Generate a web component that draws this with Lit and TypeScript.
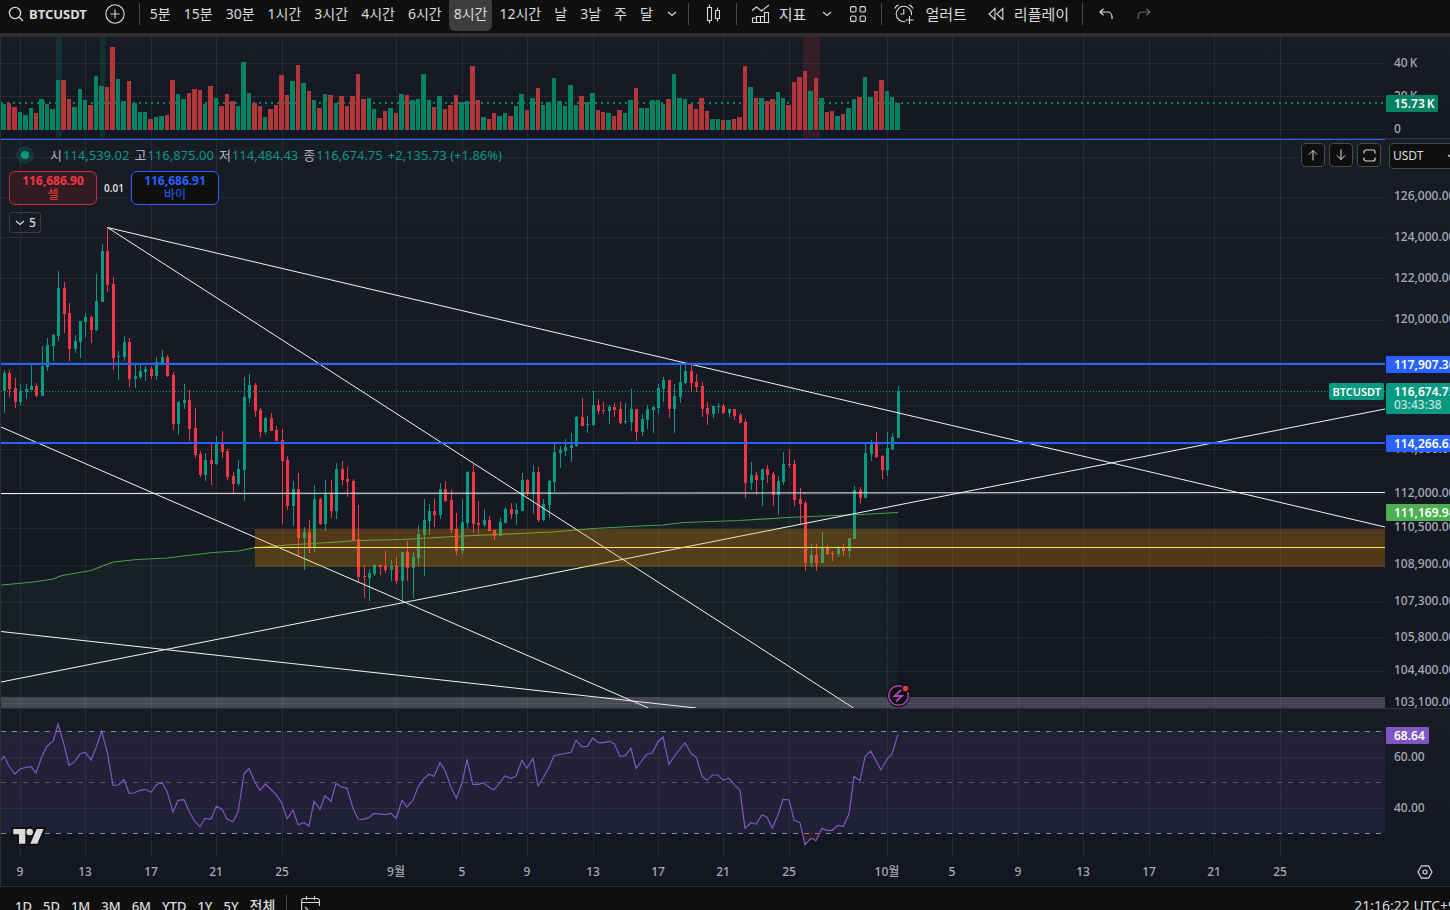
import { LitElement, html, svg, css } from "lit";
import { customElement, state } from "lit/decorators.js";
import { classMap } from "lit/directives/class-map.js";

const PANE_X = 1;
const VOLUME_TOP = 37;
const PRICE_TOP = 139;
const RSI_TOP = 709;
const FAR = 4000;

/* direction, high, body top, body bottom, low, volume top: one entry per 8h candle, in chart units */
const BARS = `
g 370 373 391 413 312;r 370 373 389 397 309;r 378 388 402 408 321;g 384 391 402 405 336;g 384 389 392 399 345
g 365 386 390 390 324;r 383 386 396 397 339;g 346 366 396 396 297;g 338 345 367 371 312;g 334 335 346 361 327
g 271 288 336 341 240;r 282 288 314 333 240;r 303 313 349 361 297;g 335 341 349 353 321;g 321 321 342 358 267
g 313 317 322 337 300;r 316 317 330 343 315;g 274 301 330 331 228;g 244 251 302 302 258;r 228 251 285 292 261
r 277 284 358 370 141;g 351 356 357 380 237;g 336 342 357 361 303;r 338 342 379 387 243;g 365 376 379 388 309
g 365 371 377 379 336;g 366 369 372 381 336;r 366 369 376 379 357;g 357 362 376 380 351;g 350 357 363 363 348
r 355 357 376 377 345;r 372 375 424 430 240;g 401 402 424 435 282;g 384 400 403 409 297;r 390 400 429 441 279
r 408 428 455 458 267;r 451 454 475 477 270;g 453 460 475 481 312;r 444 460 464 485 258;g 436 443 464 465 294
r 431 442 452 458 318;r 449 451 477 480 282;r 472 476 484 493 303;g 460 469 484 486 318;g 377 397 470 501 186
g 374 385 398 403 279;r 383 385 411 417 309;r 408 410 432 437 318;g 417 418 432 434 351;r 413 418 431 431 327
r 426 430 441 441 315;r 429 440 461 524 225;r 456 460 506 510 285;g 481 489 506 526 243;r 473 489 538 557 195
g 527 532 538 570 249;r 520 532 548 553 273;g 485 499 548 552 300;r 498 499 524 525 324;g 480 494 524 531 282
r 480 494 511 518 285;g 463 469 511 519 309;r 461 469 480 485 288;r 467 479 482 497 318;r 479 481 540 541 288
r 505 539 577 582 222;r 566 576 577 598 297;g 569 573 578 601 294;g 564 565 574 576 327;r 565 565 567 575 354
r 551 566 570 573 333;g 560 566 570 581 324;r 557 566 581 584 339;g 552 552 581 602 282;r 541 552 568 581 285
g 552 557 568 598 300;g 525 534 558 565 297;g 499 520 535 576 222;g 504 511 521 535 300;r 499 511 515 527 321
g 483 489 515 519 288;r 481 489 501 502 327;r 490 500 530 533 315;r 513 529 551 555 285;g 499 522 551 554 306
g 471 472 523 529 303;r 464 472 524 533 198;r 501 523 525 534 300;g 509 520 525 527 351;r 516 520 531 531 357
r 530 530 536 540 339;g 518 522 536 536 348;g 507 509 523 523 339;r 503 509 514 519 348;g 503 510 514 525 318
g 473 480 511 511 282;r 479 480 493 496 330;g 465 472 493 514 294;r 467 472 520 522 264;g 499 504 520 521 315
g 480 481 505 518 306;g 444 452 482 492 234;g 446 450 453 468 303;g 439 447 451 456 318;g 433 445 448 462 255
g 416 417 446 447 315;r 398 417 426 426 288;g 416 424 425 433 306;g 391 405 425 426 279;r 399 405 411 414 330
r 402 410 411 414 336;g 405 407 411 424 339;r 403 407 410 417 348;r 402 409 423 424 330;g 403 421 422 424 339
g 389 409 422 431 300;r 409 409 432 441 264;g 414 419 432 436 324;g 405 409 420 429 324;g 406 407 410 433 300
g 384 388 408 414 300;g 377 380 389 402 312;r 380 380 409 418 297;g 384 396 409 433 222;g 365 382 397 403 294
g 365 371 383 384 297;r 365 371 383 391 312;r 374 382 387 392 327;r 382 386 409 417 294;r 402 408 414 425 333
g 406 406 414 418 357;g 403 406 407 413 357;r 404 406 413 414 360;g 409 409 413 417 360;r 409 409 416 420 357
r 413 415 423 423 351;r 419 422 483 498 198;g 462 475 483 490 261;r 472 475 480 495 294;g 469 469 480 506 294
r 465 469 475 483 303;r 472 474 495 506 297;g 476 481 495 515 276;g 452 464 482 485 294;r 450 464 465 468 315
r 460 464 500 506 246;r 488 499 504 524 231;r 501 503 563 571 213;g 544 555 563 567 273;r 544 555 563 571 234
g 532 547 563 563 294;r 545 547 554 555 336;r 551 553 554 561 333;g 546 547 554 557 348;r 544 547 551 556 342
g 538 538 551 558 324;g 486 490 539 539 297;r 487 490 498 504 291;g 443 453 498 498 231;g 440 443 454 461 291
r 432 443 457 458 273;r 455 456 470 479 240;g 432 448 470 476 273;g 433 437 449 450 291;g 386 391 438 438 309
`
  .trim()
  .split(/[;\n]/)
  .map((row, i) => {
    const [dir, ...n] = row.trim().split(" ");
    const [high, top, bottom, low, vol] = n.map(Number);
    return { up: dir === "g", high, top, bottom, low, volTop: Math.round(vol / 3), x: barX(i) };
  });

function barX(i: number) {
  return Math.floor(4.2 + 5.4525 * i);
}

const AVERAGE: number[][] = [
  [1, 585], [18, 583.5], [37, 581.5], [53, 579], [62, 575.5], [91, 570.5], [100, 567], [113, 562],
  [137, 559.5], [167, 558], [187, 555.5], [213, 552.5], [238, 551], [253, 548], [287, 545], [330, 542.5],
  [358, 540.5], [403, 539.5], [463, 536], [520, 533.5], [553, 532], [593, 528.5], [640, 526], [663, 525],
  [683, 522.5], [740, 520.5], [787, 517.5], [860, 514.5], [898, 512.5],
];

const RSI = `3,211 12,199 27,228 45,252 61,236 93,229 108,249 125,201 141,168 160,153 174,102 190,156 207,226
222,217 240,192 256,187 273,210 288,173 305,124 322,187 339,286 355,285 372,268 387,310 402,309 420,301 436,298
453,307 469,285 486,277 502,307 519,367 534,331 552,329 567,363 583,392 600,410 615,385 633,387 649,349 666,358
681,387 699,395 714,367 732,252 747,235 763,273 780,301 796,282 828,313 846,340 861,386 879,361 894,404 912,398
927,409 942,334 960,358 975,317 993,334 1008,280 1024,291 1041,295 1059,355 1074,387 1090,388 1107,383 1122,370
1155,374 1173,370 1189,385 1206,331 1221,351 1239,331 1254,291 1270,268 1287,253 1302,259 1320,218 1336,243
1353,291 1369,325 1387,277 1401,208 1418,283 1435,283 1450,278 1467,292 1482,299 1498,281 1515,258 1532,265
1548,259 1566,211 1581,235 1599,205 1614,288 1631,261 1647,232 1662,197 1713,187 1728,151 1746,170 1762,169
1779,144 1794,158 1812,158 1828,154 1843,161 1860,199 1876,197 1893,175 1908,235 1941,192 1957,189 1974,155
1989,141 2007,223 2023,199 2055,158 2073,190 2089,202 2106,259 2121,271 2137,255 2154,255 2170,271 2187,265
2202,283 2220,301 2235,415 2253,398 2268,403 2286,374 2301,382 2317,414 2334,375 2349,328 2367,329 2382,390
2400,398 2415,464 2433,445 2448,452 2466,415 2480,421 2497,421 2514,406 2530,409 2547,372 2562,259 2580,272
2595,200 2612,183 2643,240 2661,207 2676,192 2694,133`
  .split(/\s+/)
  .map((pair) => {
    const [x, y] = pair.split(",").map(Number);
    return `${(x / 3).toFixed(1)},${(690 + y / 3).toFixed(1)}`;
  })
  .join(" ");

const DATES: [number, string][] = [
  [20, "9"], [85, "13"], [151, "17"], [216, "21"], [282, "25"], [396, "9월"], [462, "5"], [527, "9"],
  [593, "13"], [658, "17"], [723, "21"], [789, "25"], [887, "10월"], [952, "5"], [1018, "9"], [1083, "13"],
  [1149, "17"], [1214, "21"], [1280, "25"],
];

const PRICE_GRID = [157, 197, 237, 278, 320, 362, 405, 449, 494, 528, 565, 602, 637, 671, 703];
const PRICE_LABELS: [number, string][] = [
  [196, "126,000.00"], [237, "124,000.00"], [278, "122,000.00"], [319, "120,000.00"], [449, "114,000.00"],
  [493, "112,000.00"], [527, "110,500.00"], [564, "108,900.00"], [601, "107,300.00"], [637, "105,800.00"],
  [670, "104,400.00"], [702, "103,100.00"],
];

/* x1, y1, x2, y2 of each drawn trend line */
const TREND_LINES = [
  [107.5, 227.5, 1385, 527],
  [107.5, 227.5, 853.5, 708],
  [1, 427, 648.5, 708],
  [1, 682, 1385, 409],
  [1, 631.5, 696, 708],
  [1, 493.5, 1385, 492.5],
];

const INTERVALS = ["5분", "15분", "30분", "1시간", "3시간", "4시간", "6시간", "8시간", "12시간", "날", "3날", "주", "달"];
const RANGES = ["1D", "5D", "1M", "3M", "6M", "YTD", "1Y", "5Y", "전체"];

const gridV = (y1: number, y2: number) =>
  DATES.map(([x]) => svg`<line class="grid" x1=${x + 0.5} x2=${x + 0.5} y1=${y1} y2=${y2} />`);
const gridH = (ys: number[]) =>
  ys.map((y) => svg`<line class="grid" x1="0" x2=${FAR} y1=${y + 0.5} y2=${y + 0.5} />`);

const chevron = html`<svg width="10" height="6" viewBox="0 0 10 6" aria-hidden="true">
  <path d="M1 1l4 3.500L9 1" fill="none" stroke="currentColor" stroke-width="1.100" />
</svg>`;

@customElement("price-axis")
class PriceAxis extends LitElement {
  static properties = { top: { type: Number }, labels: { attribute: false }, tags: { attribute: false } };
  top = 0;
  labels: [number, string][] = [];
  tags: { y: number; h: number; w: number; color: string; text: string; sub?: string }[] = [];

  static styles = css`
    :host { display: block; }
    svg { display: block; width: 100%; height: 100%; }
    text { font: 500 12px "Noto Sans", "Noto Sans CJK KR", sans-serif; fill: #a8abb4; }
    .strong { font-weight: 600; fill: #fff; }
    .sub { fill: #fff; fill-opacity: 0.75; }
  `;

  render() {
    return html`<svg>
      <g transform=${`translate(0 ${-this.top})`}>
        ${this.labels.map(([y, t]) => svg`<text x="9" y=${y + 4}>${t}</text>`)}
        ${this.tags.map(
          (t) => svg`<rect x="1" y=${t.y} width=${t.w} height=${t.h} rx="1" fill=${t.color} />
            <text class="strong" x="9" y=${t.y + 13}>${t.text}</text>
            ${t.sub ? svg`<text class="sub" x="9" y=${t.y + 26}>${t.sub}</text>` : null}`
        )}
      </g>
    </svg>`;
  }
}

@customElement("app-root")
export class AppRoot extends LitElement {
  @state() private interval = "8시간";

  static styles = css`
    :host {
      display: block;
      height: 100vh;
      overflow: hidden;
      background: #0f0f0f;
      color: #dbdbdb;
      font: 14px/20px "Noto Sans", "Noto Sans CJK KR", sans-serif;
    }
    * { box-sizing: border-box; }
    button, select {
      font: inherit;
      color: inherit;
      background: none;
      border: 0;
      margin: 0;
      padding: 0;
      cursor: pointer;
    }
    svg { display: block; flex: none; }

    .toolbar {
      display: flex;
      align-items: center;
      height: 33px;
      padding: 0 8px 5px;
      overflow: hidden;
      white-space: nowrap;
    }
    .symbol { display: flex; align-items: center; gap: 5px; font-weight: 700; font-size: 13px; }
    .compare { margin-left: 18px; }
    .sep { flex: none; width: 1px; height: 22px; background: #4a4a4a; }
    .compare + .sep { margin-left: 14px; }
    .intervals { display: flex; gap: 1px; margin-left: 4px; }
    .intervals button { height: 34px; padding: 0 6px; border-radius: 6px; }
    .intervals .on { background: #3d3d3d; padding: 0 5px; }
    .more { margin: 0 11px 0 8px; }
    .style { margin: 0 16px 0 17px; }
    .indicators { display: flex; align-items: center; gap: 9px; margin-left: 14px; font-size: 15px; }
    .more-ind { margin: 0 18px 0 16px; }
    .layouts { margin-right: 15px; }
    .alert { display: flex; align-items: center; gap: 10px; margin-left: 12px; font-size: 15px; }
    .replay { display: flex; align-items: center; gap: 10px; margin: 0 13px 0 21px; font-size: 15px; }
    .undo { margin: 0 24px 0 16px; }
    .redo { color: #6a6a6a; }

    .chart {
      width: calc(100% + 20px);
      border-top: 4px solid #2e2e2e;
      border-left: 1px solid #2e2e2e;
      background: #131722;
    }
    .pane { display: flex; position: relative; background: linear-gradient(#181c27, #131722); }
    .pane > svg { flex: 1; min-width: 0; height: 100%; }
    .pane price-axis { flex: 0 0 85px; }
    .volume { height: 102px; border-bottom: 1px solid #2e313b; border-top-left-radius: 4px; }
    .price { height: 570px; border-bottom: 1px solid #2e313b; }
    .rsi { height: 148px; }

    .grid { stroke: #f0f3fa; stroke-opacity: 0.07; }
    .crisp { shape-rendering: crispEdges; }
    .up { fill: #089981; }
    .down { fill: #f23645; }
    .vol-up { fill: #038362; }
    .vol-down { fill: #b2373a; }
    .trend { stroke: #f4f4f4; stroke-width: 1; }

    .legend {
      position: absolute;
      top: 6px;
      left: 14px;
      display: flex;
      align-items: center;
      font-size: 13px;
      color: #089981;
      white-space: nowrap;
    }
    .legend .dot { margin-right: 15px; }
    .legend b { font-weight: 400; color: #b2b5be; margin-right: 1px; }
    .legend span { margin-right: 5px; }

    .trade { position: absolute; top: 32px; left: 8px; display: flex; align-items: center; }
    .trade button {
      width: 88px;
      height: 34px;
      border: 1px solid;
      border-radius: 6px;
      font-size: 12px;
      line-height: 14px;
    }
    .trade strong { display: block; font-weight: 700; }
    .trade .sell { color: #f23645; background: #311c21; border-color: #c22f3c; }
    .trade .buy { color: #2962ff; background: #0f0f0f; }
    .trade .qty { width: 34px; border: 0; font-size: 10px; font-weight: 600; }

    .collapse {
      position: absolute;
      top: 73px;
      left: 8px;
      display: flex;
      align-items: center;
      gap: 4px;
      width: 32px;
      height: 21px;
      padding-left: 5px;
      border: 1px solid #3d3d3d;
      border-radius: 3px;
      font-size: 12px;
      font-weight: 500;
    }

    .corner { position: absolute; top: 4px; right: 0; display: flex; gap: 4px; }
    .corner button {
      display: grid;
      place-items: center;
      width: 24px;
      height: 24px;
      border: 1px solid #4a4a4a;
      border-radius: 4px;
      background: #0f0f0f;
    }
    .corner .unit { position: relative; margin-left: 4px; width: 81px; height: 26px; }
    .unit select {
      appearance: none;
      width: 100%;
      height: 26px;
      padding: 0 3px;
      border: 1px solid #4a4a4a;
      border-radius: 4px;
      background: #0f0f0f;
      font-size: 12px;
    }
    .unit svg { position: absolute; right: 13px; top: 11px; pointer-events: none; }

    .ticker {
      position: absolute;
      top: 244px;
      right: 85px;
      height: 17px;
      margin-right: 1px;
      padding: 0 3px;
      border-radius: 2px;
      background: #089981;
      color: #fff;
      font-size: 11px;
      line-height: 17px;
      font-weight: 600;
    }

    .time { display: flex; height: 29px; background: #131722; }
    .time > svg { flex: 1; min-width: 0; height: 29px; }
    .time text { font-size: 12px; font-weight: 500; fill: #a8abb4; text-anchor: middle; }
    .time button { display: flex; align-items: center; flex: 0 0 85px; padding-left: 32px; }

    .footer {
      display: flex;
      align-items: center;
      width: calc(100% + 20px);
      height: 39px;
      padding-left: 9px;
      border-top: 1px solid #2e2e2e;
      white-space: nowrap;
    }
    .ranges { display: flex; font-size: 13px; font-weight: 500; }
    .ranges button { padding: 0 5px 0 6px; }
    .ranges button:last-child { font-size: 14px; }
    .footer .sep { margin: 0 14px 0 6px; }
    .clock { margin-left: auto; margin-right: 14px; }
  `;

  private toolbar() {
    return html`<header class="toolbar">
      <button class="symbol">
        <svg width="16" height="16" viewBox="0 0 16 16" fill="none" stroke="currentColor" stroke-width="1.300" aria-hidden="true">
          <circle cx="7" cy="7" r="5.600" /><path d="M11 11l4 4" />
        </svg>
        BTCUSDT
      </button>
      <button class="compare" aria-label="비교">
        <svg width="20" height="20" viewBox="0 0 20 20" fill="none" stroke="currentColor" stroke-width="1.100">
          <circle cx="10" cy="10" r="9.200" /><path d="M10 5.500v9M5.500 10h9" />
        </svg>
      </button>
      <i class="sep"></i>
      <nav class="intervals">
        ${INTERVALS.map(
          (t) => html`<button class=${classMap({ on: t === this.interval })} @click=${() => (this.interval = t)}>${t}</button>`
        )}
      </nav>
      <button class="more" aria-label="간격 더보기">${chevron}</button>
      <i class="sep"></i>
      <button class="style" aria-label="캔들">
        <svg width="14" height="20" viewBox="0 0 14 20" fill="none" stroke="currentColor" stroke-width="1.100">
          <path d="M1.500 3.500h4v13h-4zM3.500 .5v3M3.500 16.500v3M9.500 6.500h4v8h-4zM11.500 3.500v3M11.500 14.500v3" />
        </svg>
      </button>
      <i class="sep"></i>
      <button class="indicators">
        <svg width="19" height="20" viewBox="0 0 19 20" fill="none" stroke="currentColor" stroke-width="1.100" aria-hidden="true">
          <path d="M1 6.500l4.500-3.500 5 4L18 1M1.500 18.500v-4.500h4v4.500M5.500 18.500v-6h4v6M9.500 12.500h4v6M13.500 13V8.500h4v10h-16" />
        </svg>
        지표
      </button>
      <button class="more-ind" aria-label="지표 더보기">${chevron}</button>
      <button class="layouts" aria-label="레이아웃">
        <svg width="16" height="16" viewBox="0 0 16 16" fill="none" stroke="currentColor" stroke-width="1.100">
          <rect x=".6" y=".6" width="5.400" height="5.400" rx="1.200" /><rect x="10" y=".6" width="5.400" height="5.400" rx="1.200" />
          <rect x=".6" y="10" width="5.400" height="5.400" rx="1.200" /><rect x="10" y="10" width="5.400" height="5.400" rx="1.200" />
        </svg>
      </button>
      <i class="sep"></i>
      <button class="alert">
        <svg width="21" height="20" viewBox="0 0 21 20" fill="none" stroke="currentColor" stroke-width="1.100" aria-hidden="true">
          <path d="M17.500 11.200A7.700 7.700 0 1 0 11.200 17.600M9.800 5v5H6.500M15.500 12v8M11.500 16h8M.7 4.500A8 8 0 0 1 4.500.8M19 4.500A8 8 0 0 0 15.200.8" />
        </svg>
        얼러트
      </button>
      <button class="replay">
        <svg width="16" height="14" viewBox="0 0 16 14" fill="none" stroke="currentColor" stroke-width="1.100" aria-hidden="true">
          <path d="M7 1.500v11L1 7zM14.800 1.500v11L8.800 7z" />
        </svg>
        리플레이
      </button>
      <i class="sep"></i>
      <button class="undo" aria-label="실행 취소">
        <svg width="14" height="12" viewBox="0 0 14 12" fill="none" stroke="currentColor" stroke-width="1.200">
          <path d="M4.500.7L1 4l3.500 3.300M1 4h7.500a4.500 4.500 0 0 1 4.500 4.500v2.500" />
        </svg>
      </button>
      <button class="redo" aria-label="다시 실행">
        <svg width="14" height="12" viewBox="0 0 14 12" fill="none" stroke="currentColor" stroke-width="1.200">
          <path d="M9.500.7L13 4 9.500 7.300M13 4H5.500A4.500 4.500 0 0 0 1 8.500v2.500" />
        </svg>
      </button>
    </header>`;
  }

  private volumePane() {
    return html`<section class="pane volume">
      <svg role="img" aria-label="거래량">
        <g class="crisp" transform=${`translate(${-PANE_X} ${-VOLUME_TOP})`}>
          ${gridV(37, 138)} ${gridH([63, 96, 129])}
          <rect x="56" y="37" width="6" height="101" fill="#089981" fill-opacity=".18" />
          <rect x="100" y="37" width="5" height="101" fill="#089981" fill-opacity=".18" />
          <rect x="803" y="37" width="17" height="101" fill="#b2282d" fill-opacity=".19" />
          <line x1="1" x2=${FAR} y1="103" y2="103" stroke="#038362" stroke-width="2" stroke-dasharray="2 4" />
          ${BARS.map((b, i) => {
            const left = i ? BARS[i - 1].x + 3 : 1;
            return svg`<rect class=${b.up ? "vol-up" : "vol-down"} x=${left} y=${b.volTop} width=${b.x + 2 - left} height=${130 - b.volTop} />`;
          })}
        </g>
      </svg>
      <price-axis
        .top=${VOLUME_TOP}
        .labels=${[[63, "40\u2009K"], [96, "20\u2009K"], [129, "0"]]}
        .tags=${[{ y: 95, h: 17, w: 52, color: "#038362", text: "15.73\u2009K" }]}
      ></price-axis>
    </section>`;
  }

  private pricePane() {
    const line = AVERAGE.map((p) => p.join(",")).join(" ");
    return html`<section class="pane price">
      <svg role="img" aria-label="BTCUSDT 가격">
        <g transform=${`translate(${-PANE_X} ${-PRICE_TOP})`}>
          <g class="crisp">${gridV(139, 708)} ${gridH(PRICE_GRID)}</g>
          <polygon points=${`1,708 ${line} 898,708`} fill="#4caf50" fill-opacity=".055" />
          <polyline points=${line} fill="none" stroke="#45a049" stroke-width="1.200" />
          <g class="crisp">
            ${BARS.map(
              (b) => svg`<g class=${b.up ? "up" : "down"}>
                <rect x=${b.x} y=${b.high} width="1" height=${b.low - b.high} />
                <rect x=${b.x - 1} y=${b.top} width="3" height=${Math.max(1, b.bottom - b.top)} />
              </g>`
            )}
            <line x1="1" x2=${FAR} y1="391.5" y2="391.5" stroke="#089981" stroke-dasharray="1 2" />
          </g>
          ${TREND_LINES.map(([x1, y1, x2, y2]) => {
            const open = x2 === 1385;
            const ex = open ? FAR : x2;
            const ey = open ? y1 + ((y2 - y1) * (FAR - x1)) / (x2 - x1) : y2;
            return svg`<line class="trend" x1=${x1} y1=${y1} x2=${ex} y2=${ey} />`;
          })}
          <g class="crisp">
            <rect x="255" y="529" width=${FAR} height="38" fill="#ff9800" fill-opacity=".26" />
            <rect x="254" y="547" width=${FAR} height="1" fill="#ffe53b" />
            <rect x="1" y="697" width=${FAR} height="11" fill="#e1c4e7" fill-opacity=".25" />
            <rect x="1" y="139" width=${FAR} height="1" fill="#2962ff" />
            <rect x="1" y="363" width=${FAR} height="2" fill="#2962ff" />
            <rect x="1" y="442" width=${FAR} height="2" fill="#2962ff" />
          </g>
          <circle cx="898.5" cy="695.5" r="11.500" fill="#0f0f0f" />
          <circle cx="898.5" cy="695.5" r="9.800" fill="#0f0f0f" stroke="#ab47bc" stroke-width="1.500" />
          <path d="M901 690l-6.500 6h7.500l-6 5.500" fill="none" stroke="#ab47bc" stroke-width="1.800" />
          <circle cx="905.5" cy="688.5" r="4" fill="#0f0f0f" />
          <circle cx="905.5" cy="688.5" r="2.700" fill="#f23645" />
        </g>
      </svg>
      <price-axis
        .top=${PRICE_TOP}
        .labels=${PRICE_LABELS}
        .tags=${[
          { y: 356, h: 17, w: 90, color: "#2962ff", text: "117,907.36" },
          { y: 383, h: 31, w: 90, color: "#089981", text: "116,674.75", sub: "03:43:38" },
          { y: 435, h: 17, w: 90, color: "#2962ff", text: "114,266.63" },
          { y: 504, h: 17, w: 90, color: "#4caf50", text: "111,169.94" },
        ]}
      ></price-axis>

      <div class="legend">
        <svg class="dot" width="20" height="20"><circle cx="10" cy="10" r="9" fill="#089981" fill-opacity=".2" /><circle cx="10" cy="10" r="4" fill="#089981" /></svg>
        <b>시</b><span>114,539.02</span><b>고</b><span>116,875.00</span><b>저</b><span>114,484.43</span
        ><b>종</b><span>116,674.75</span><span>+2,135.73 (+1.86%)</span>
      </div>
      <div class="trade">
        <button class="sell"><strong>116,686.90</strong>셀</button>
        <button class="qty">0.01</button>
        <button class="buy"><strong>116,686.91</strong>바이</button>
      </div>
      <button class="collapse">${chevron} 5</button>
      <div class="corner">
        <button aria-label="위로">
          <svg width="12" height="12" viewBox="0 0 12 12" fill="none" stroke="currentColor"><path d="M6 11.500V1.500M2 5.500l4-4 4 4" /></svg>
        </button>
        <button aria-label="아래로">
          <svg width="12" height="12" viewBox="0 0 12 12" fill="none" stroke="currentColor"><path d="M6 .5v10M2 6.500l4 4 4-4" /></svg>
        </button>
        <button aria-label="최대화">
          <svg width="13" height="13" viewBox="0 0 13 13" fill="none" stroke="currentColor" stroke-width="1.200">
            <path d="M1 4.500V3a2 2 0 0 1 2-2h7a2 2 0 0 1 2 2v1.500M12 8.500V10a2 2 0 0 1-2 2H3a2 2 0 0 1-2-2V8.500" />
          </svg>
        </button>
        <div class="unit">
          <select aria-label="통화"><option>USDT</option></select>
          ${chevron}
        </div>
      </div>
      <span class="ticker">BTCUSDT</span>
    </section>`;
  }

  private rsiPane() {
    return html`<section class="pane rsi">
      <svg role="img" aria-label="RSI">
        <g transform=${`translate(${-PANE_X} ${-RSI_TOP})`}>
          <g class="crisp">
            ${gridV(709, 857)} ${gridH([757, 808])}
            <rect x="1" y="731" width=${FAR} height="102" fill="#7e57c2" fill-opacity=".12" />
            <g stroke="#868993" stroke-dasharray="5 6">
              <line x1="1" x2=${FAR} y1="731.5" y2="731.5" />
              <line x1="1" x2=${FAR} y1="782.5" y2="782.5" stroke-opacity=".5" />
              <line x1="1" x2=${FAR} y1="833.5" y2="833.5" />
            </g>
          </g>
          <polygon points="802,833 805,844.7 811,838.3 816,840.7 821,833" fill="#f23645" fill-opacity=".12" />
          <polyline points=${RSI} fill="none" stroke="#7e57c2" stroke-width="1.200" />
          <path
            d="M13.300 829H25.300V843.700H19V834.300H13.300ZM36.700 829H43.600L37.300 843.700H30.300Z M26.400 832a3.300 3.300 0 1 0 6.600 0a3.300 3.300 0 1 0 -6.600 0Z"
            fill="#dbdbdb" stroke="#0f0f0f" stroke-width="4" paint-order="stroke"
          />
        </g>
      </svg>
      <price-axis
        .top=${RSI_TOP}
        .labels=${[[757, "60.00"], [808, "40.00"]]}
        .tags=${[{ y: 727, h: 17, w: 43, color: "#7e57c2", text: "68.64" }]}
      ></price-axis>
    </section>`;
  }

  render() {
    return html`
      ${this.toolbar()}
      <main class="chart">
        ${this.volumePane()} ${this.pricePane()} ${this.rsiPane()}
        <div class="time">
          <svg>${DATES.map(([x, t]) => svg`<text x=${x - 1} y="19">${t}</text>`)}</svg>
          <button aria-label="차트 설정">
            <svg width="16" height="14" viewBox="0 0 16 14" fill="none" stroke="#dbdbdb" stroke-width="1.200">
              <path d="M4.500 .8h7L15 7l-3.500 6.200h-7L1 7z" /><circle cx="8" cy="7" r="2" />
            </svg>
          </button>
        </div>
      </main>
      <footer class="footer">
        <nav class="ranges">${RANGES.map((r) => html`<button>${r}</button>`)}</nav>
        <i class="sep"></i>
        <button aria-label="날짜로 이동">
          <svg width="19" height="20" viewBox="0 0 19 20" fill="none" stroke="currentColor" stroke-width="1.100">
            <path d="M4 18.500H3A2.300 2.300 0 0 1 .6 16.200V4.800A2.300 2.300 0 0 1 3 2.500h13a2.300 2.300 0 0 1 2.400 2.300V10M.6 6.500h17.800M5.500 0v4M13.500 0v4M4 11l3.500 3.500L4 18M7.500 14.500H18" />
          </svg>
        </button>
        <button class="clock">21:16:22 UTC+9</button>
      </footer>
    `;
  }
}
